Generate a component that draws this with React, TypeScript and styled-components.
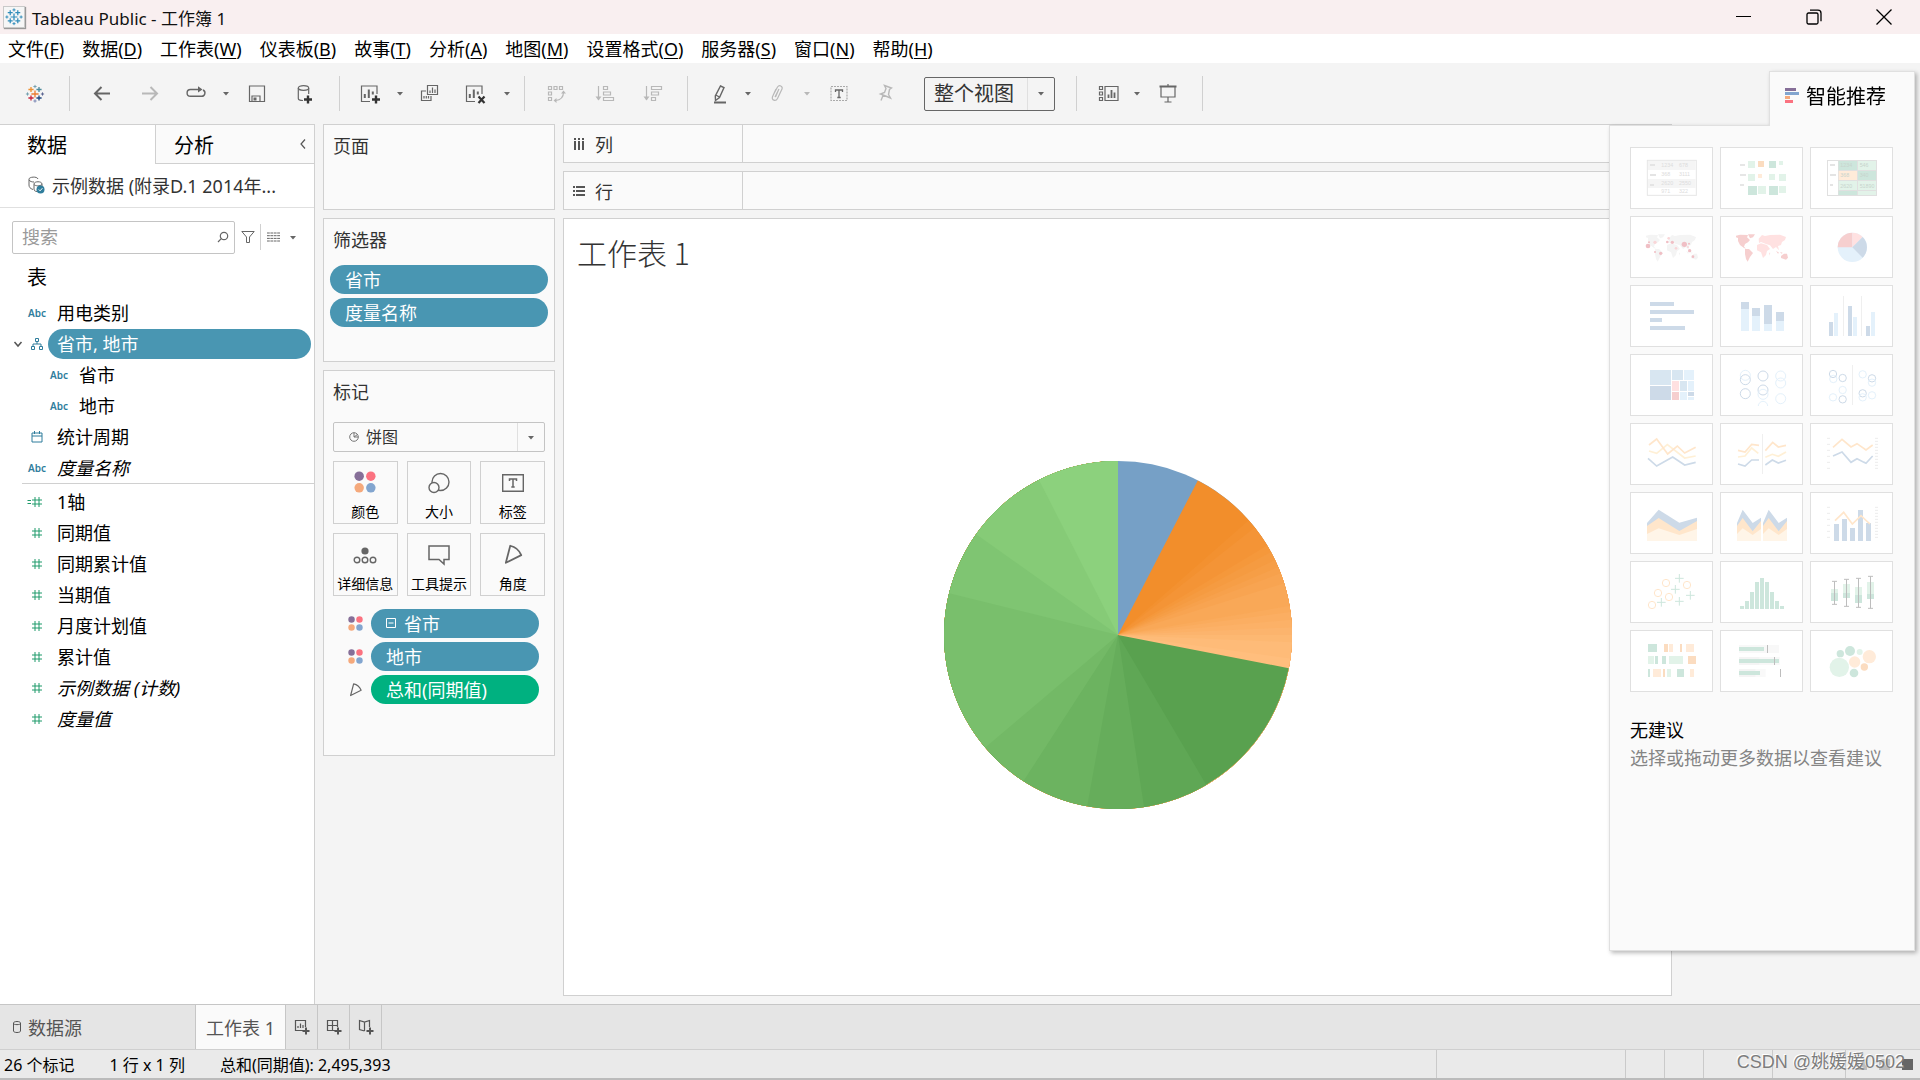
import React from "react";
import styled, { createGlobalStyle, css } from "styled-components";

const c = {
  line: "#d0d0d0",
  soft: "#e0e0e0",
  shell: "#f4f4f4",
  card: "#fafafa",
  ink: "#333333",
  icon: "#666666",
  dim: "#b8b8b8",
  blue: "#4996b2",
  green: "#00b180",
};

const Global = createGlobalStyle`
  *, *::before, *::after { box-sizing: border-box; }
  body { margin: 0; background: ${c.shell}; }
  body, button, input, select {
    font-family: "Noto Sans", "Noto Sans CJK SC", sans-serif;
    font-size: 18px;
  }
  button { flex: none; margin: 0; padding: 0; border: 0; background: none; color: inherit; cursor: pointer; }
  h1, h2, h3, p, ul { margin: 0; padding: 0; font-weight: 400; }
  ul { list-style: none; }
  svg { display: block; flex: none; }
`;

const Shell = styled.div`
  position: relative;
  display: flex;
  flex-direction: column;
  min-height: 100vh;
  overflow: hidden;
  color: ${c.ink};
`;

/* ---------- window chrome ---------- */
const TitleBar = styled.header`
  display: flex;
  align-items: center;
  height: 34px;
  padding: 0 1px 0 3px;
  background: #f9eff0;
  color: #111;
`;
const AppTitle = styled.h1`
  flex: 1;
  margin-left: 7px;
  font-size: 17px;
`;
const AppBadge = styled.span`
  padding: 1px;
  border: 1px solid #c9c9c9;
  background: #f6f6f6;
  box-shadow: 1px 1px 1px #999;
`;
const WindowButton = styled.button`
  display: grid;
  place-items: center;
  width: 70px;
  height: 34px;
`;
const MenuBar = styled.nav`
  display: flex;
  align-items: center;
  gap: 18px;
  height: 29px;
  padding-left: 8px;
  background: #fff;
  color: #000;
`;
const MenuItem = styled.button`
  white-space: nowrap;
  line-height: 28px;
  u { text-underline-offset: 2px; }
`;

/* ---------- toolbar ---------- */
const Toolbar = styled.div`
  display: flex;
  align-items: center;
  height: 61px;
  padding-left: 11px;
  background: ${c.shell};
`;
const ToolButton = styled.button<{ $tight?: boolean; $dim?: boolean }>`
  display: grid;
  place-items: center;
  width: ${(p) => (p.$tight ? 44 : 48)}px;
  height: 36px;
  color: ${(p) => (p.$dim ? c.dim : c.icon)};
`;
const CaretButton = styled.button<{ $dim?: boolean }>`
  display: grid;
  place-items: center;
  width: 15px;
  height: 36px;
  color: ${(p) => (p.$dim ? c.dim : c.icon)};
`;
const Divider = styled.span`
  width: 1px;
  height: 35px;
  margin: 0 8px 0 10px;
  background: ${c.line};
`;
const SelectBox = styled.label<{ $strong?: boolean }>`
  display: flex;
  align-items: center;
  border: 1px solid ${(p) => (p.$strong ? "#666" : "#c4c4c4")};
  border-radius: 2px;
  ${(p) =>
    p.$strong
      ? css`width: 131px; height: 34px; margin: 0 11px 0 14px; padding-left: 9px;`
      : css`height: 30px; margin-top: 9px; padding-left: 15px;`}
  select {
    flex: 1;
    min-width: 0;
    margin: 0 0 0 ${(p) => (p.$strong ? 0 : 7)}px;
    padding: 0;
    border: 0;
    appearance: none;
    background: none;
    color: ${c.ink};
    font-size: ${(p) => (p.$strong ? 20 : 16)}px;
  }
`;
const SelectArrow = styled.span`
  display: grid;
  place-items: center;
  align-self: stretch;
  width: 27px;
  border-left: 1px solid ${c.soft};
  color: ${c.icon};
`;

/* ---------- workspace ---------- */
const Workspace = styled.div`
  display: grid;
  grid-template-columns: 315px 232px minmax(0, 1fr);
  flex: 1;
  column-gap: 8px;
  padding-right: 248px;
`;
const DataPane = styled.aside`
  border-top: 1px solid ${c.line};
  border-right: 1px solid ${c.line};
  background: #fff;
`;
const PaneTabs = styled.div`
  display: grid;
  grid-template-columns: 155px 1fr;
  height: 39px;
`;
const PaneTab = styled.button<{ $active?: boolean }>`
  display: flex;
  align-items: center;
  justify-content: space-between;
  padding: 0 7px 0 ${(p) => (p.$active ? 27 : 18)}px;
  color: #000;
  font-size: 20px;
  ${(p) =>
    !p.$active &&
    css`
      border-left: 1px solid ${c.line};
      border-bottom: 1px solid ${c.line};
      background: ${c.card};
    `}
`;
const Source = styled.div`
  display: flex;
  align-items: center;
  gap: 7px;
  height: 44px;
  padding: 0 0 2px 28px;
  border-bottom: 1px solid ${c.soft};
`;
const SearchRow = styled.div`
  display: flex;
  align-items: center;
  padding: 11px 14px 0 12px;
  color: ${c.icon};
`;
const SearchBox = styled.label`
  display: flex;
  align-items: center;
  flex: 1;
  min-width: 0;
  height: 33px;
  padding: 0 5px 0 9px;
  border: 1px solid #c4c4c4;
  border-radius: 2px;
  input {
    flex: 1;
    min-width: 0;
    padding: 0;
    border: 0;
    outline: 0;
    background: none;
  }
  input::placeholder { color: #9a9a9a; opacity: 1; }
`;
const SmallButton = styled.button<{ $ruled?: boolean }>`
  display: grid;
  place-items: center;
  width: 25px;
  height: 26px;
  ${(p) => p.$ruled && css`border-left: 1px solid ${c.line};`}
`;
const TablesHeading = styled.h2`
  padding: 4px 0 0 27px;
  color: #000;
  font-size: 20px;
  line-height: 38px;
`;
const Field = styled.li<{ $nested?: boolean; $measure?: boolean }>`
  display: flex;
  align-items: center;
  height: 31px;
  padding-left: ${(p) => (p.$nested ? 22 : 0)}px;
  color: ${(p) => (p.$measure ? "#1e9a6a" : "#2f7d9c")};
`;
const FieldIcon = styled.span`
  display: grid;
  place-items: center;
  width: 20px;
  font-size: 10px;
  font-weight: 600;
`;
const FieldTwist = styled.button`
  display: grid;
  place-items: center;
  width: 10px;
  margin: 0 4px 0 13px;
  color: #555;
`;
const FieldName = styled.button<{ $picked?: boolean; $italic?: boolean }>`
  flex: 1;
  height: 30px;
  margin: 0 3px 0 1px;
  padding-left: 9px;
  border-radius: 15px;
  text-align: left;
  white-space: nowrap;
  line-height: 30px;
  color: ${(p) => (p.$picked ? "#fff" : "#000")};
  background: ${(p) => (p.$picked ? c.blue : "none")};
  font-style: ${(p) => (p.$italic ? "italic" : "normal")};
`;
const FieldList = styled.ul<{ $ruled?: boolean }>`
  ${(p) =>
    p.$ruled &&
    css`
      &::before {
        content: "";
        display: block;
        height: 1px;
        margin: 0 0 2px 22px;
        background: ${c.line};
      }
    `}
`;

const Cards = styled.div`
  display: flex;
  flex-direction: column;
  gap: 8px;
`;
const Card = styled.section<{ $h: number }>`
  min-height: ${(p) => p.$h}px;
  padding: 0 9px;
  border: 1px solid ${c.line};
  background: ${c.card};
`;
const CardTitle = styled.h2`
  font-size: 18px;
  line-height: 42px;
`;
const PillStack = styled.div`
  display: grid;
  gap: 4px;
  margin: 4px -3px 0;
`;
const Pill = styled.button<{ $green?: boolean }>`
  display: flex;
  align-items: center;
  gap: 8px;
  flex: 1;
  height: 29px;
  padding: 0 0 2px 15px;
  border-radius: 15px;
  background: ${(p) => (p.$green ? c.green : c.blue)};
  color: #fff;
`;
const MarkGrid = styled.div`
  display: grid;
  grid-template-columns: repeat(3, 1fr);
  gap: 9px;
  margin: 9px 0 13px;
`;
const MarkButton = styled.button`
  display: flex;
  flex-direction: column;
  align-items: center;
  justify-content: space-between;
  height: 63px;
  padding: 9px 0 1px;
  border: 1px solid ${c.line};
  color: #000;
  font-size: 14px;
  line-height: 20px;
  white-space: nowrap;
  svg { color: ${c.icon}; }
`;
const MarkPills = styled.ul`
  display: grid;
  gap: 4px;
  padding: 0 6px 0 15px;
  li { display: flex; align-items: center; gap: 8px; color: ${c.icon}; }
`;

const Main = styled.main`
  display: flex;
  flex-direction: column;
  gap: 8px;
  padding-bottom: 8px;
`;
const Shelf = styled.section`
  display: flex;
  height: 39px;
  border: 1px solid ${c.line};
  background: ${c.card};
`;
const ShelfName = styled.h2`
  display: flex;
  align-items: center;
  gap: 10px;
  width: 179px;
  padding-left: 9px;
  border-right: 1px solid ${c.line};
  font-size: 18px;
  color: ${c.ink};
`;
const Sheet = styled.section`
  display: flex;
  flex-direction: column;
  flex: 1;
  border: 1px solid ${c.line};
  background: #fff;
`;
const SheetTitle = styled.h2`
  padding: 10px 0 0 13px;
  font-family: "Noto Sans CJK SC", sans-serif;
  font-size: 30px;
  font-weight: 300;
  line-height: 46px;
`;
const Chart = styled.div`
  display: grid;
  place-items: center;
  flex: 1;
`;

/* ---------- show me ---------- */
const ShowMe = styled.aside`
  position: absolute;
  top: 71px;
  right: 5px;
  display: flex;
  flex-direction: column;
  width: 306px;
  filter: drop-shadow(2px 2px 2px rgba(0, 0, 0, 0.28));
`;
const ShowMeTab = styled.button`
  display: flex;
  align-items: center;
  align-self: flex-end;
  gap: 7px;
  z-index: 1;
  width: 146px;
  height: 55px;
  margin-bottom: -1px;
  padding: 0 0 8px 15px;
  border: 1px solid ${c.soft};
  border-bottom: 0;
  background: ${c.card};
  color: #000;
  font-size: 20px;
`;
const ShowMeBody = styled.div`
  min-height: 826px;
  padding: 21px 20px;
  border: 1px solid ${c.soft};
  background: ${c.card};
`;
const ThumbGrid = styled.div`
  display: grid;
  grid-template-columns: repeat(3, 83px);
  gap: 7px;
  margin-bottom: 24px;
`;
const Thumb = styled.button`
  height: 62px;
  border: 1px solid ${c.soft};
  background: #fff;
  svg { width: 81px; height: 60px; }
`;
const Advice = styled.p<{ $muted?: boolean }>`
  line-height: 28px;
  white-space: nowrap;
  color: ${(p) => (p.$muted ? "#858585" : "#000")};
`;

/* ---------- bottom bars ---------- */
const SheetTabs = styled.nav`
  display: flex;
  height: 45px;
  border-top: 1px solid #c6c6c6;
  background: #e5e5e5;
  color: #555;
`;
const SheetTab = styled.button<{ $kind: "source" | "sheet" | "add" }>`
  display: flex;
  align-items: center;
  border-right: 1px solid #c6c6c6;
  white-space: nowrap;
  ${(p) => p.$kind === "source" && css`gap: 5px; width: 196px; padding-left: 11px;`}
  ${(p) => p.$kind === "sheet" && css`justify-content: center; width: 90px; background: ${c.card};`}
  ${(p) => p.$kind === "add" && css`justify-content: center; width: 32px;`}
`;
const StatusBar = styled.footer`
  position: relative;
  display: flex;
  height: 31px;
  border-top: 1px solid #cfcfcf;
  border-bottom: 2px solid #bbb;
  background: #eaeaea;
  color: #000;
  font-size: 16px;
  line-height: 30px;
`;
const StatusText = styled.div`
  display: flex;
  flex: 1;
  gap: 35px;
  padding-left: 4px;
  white-space: nowrap;
`;
const StatusCell = styled.span<{ $w: number }>`
  display: flex;
  align-items: center;
  justify-content: flex-end;
  gap: 12px;
  width: ${(p) => p.$w}px;
  padding-right: 7px;
  border-left: 1px solid #cacaca;
`;
const Block = styled.i<{ $dark?: boolean }>`
  width: 11px;
  height: 11px;
  background: ${(p) => (p.$dark ? "#666" : "#bdbdbd")};
`;
const Watermark = styled.span`
  position: absolute;
  right: 15px;
  top: -3px;
  font-family: "Liberation Sans", "Noto Sans CJK SC", sans-serif;
  font-size: 18px;
  color: #7d7d7d;
  text-shadow: -1px -1px 0 #fff;
  white-space: nowrap;
`;

/* ---------- icons ---------- */
type IconProps = { size?: number; children: React.ReactNode };
const Icon = ({ size = 24, children }: IconProps) => (
  <svg width={size} height={size} viewBox={`0 0 ${size} ${size}`} fill="none" stroke="currentColor" strokeWidth="1.2" aria-hidden="true">
    {children}
  </svg>
);
const Caret = () => (
  <svg width="8" height="5" viewBox="0 0 8 5" aria-hidden="true">
    <path d="M1 1h6L4 4.5z" fill="currentColor" />
  </svg>
);
const cross = (x: number, y: number, r: number) => `M${x - r} ${y}h${2 * r}M${x} ${y - r}v${2 * r}`;

const LOGO: [number, number, number, string][] = [
  [12, 12, 3.6, "#eb7b30"],
  [8, 7.5, 2.6, "#ed9133"],
  [16, 7.5, 2.6, "#4e8b9c"],
  [8, 16, 2.6, "#c8233b"],
  [16, 16, 2.6, "#1f457e"],
  [12, 4.5, 1.6, "#76a1b0"],
  [12, 19, 1.6, "#7b87b5"],
  [4.5, 12, 1.6, "#76a1b0"],
  [19.5, 12, 1.6, "#5b6591"],
];
const Logo = ({ mono }: { mono?: boolean }) => (
  <svg width={mono ? 18 : 24} height={mono ? 18 : 24} viewBox={mono ? "2.5 2.5 19 19" : "0 0 24 24"} aria-hidden="true">
    {LOGO.map(([x, y, r, col], i) => (
      <path key={i} d={cross(x, y, r)} stroke={mono ? "#2f8cba" : col} strokeWidth={r < 2 ? 1 : 1.3} />
    ))}
  </svg>
);
const Plus = ({ x, y, r = 4 }: { x: number; y: number; r?: number }) => (
  <path d={cross(x, y, r)} stroke="#333" strokeWidth="2.4" />
);
const Dots = ({ size }: { size: number }) => (
  <svg width={size} height={size} viewBox="0 0 20 20" aria-hidden="true">
    <circle cx="4.7" cy="4.7" r="4.3" fill="#866f98" />
    <circle cx="15.3" cy="4.7" r="4.3" fill="#fb7280" />
    <circle cx="4.7" cy="15.3" r="4.3" fill="#f5a97c" />
    <circle cx="15.3" cy="15.3" r="4.3" fill="#82a5cf" />
  </svg>
);
const Hash = ({ calc }: { calc?: boolean }) => (
  <svg width="20" height="12" viewBox="0 0 20 12" stroke="currentColor" fill="none" aria-hidden="true">
    <path d="M5 4h10M5 8h10M8 1v10M12 1v10" />
    {calc && <path d="M0.500 4.500h3.500M0.500 7.500h3.500" />}
  </svg>
);
const Tree = () => (
  <svg width="12" height="12" viewBox="0 0 12 12" stroke="currentColor" fill="none" aria-hidden="true">
    <path d="M4.500 .5h3v3h-3zM.5 8.500h3v3h-3zM8.500 8.500h3v3h-3zM6 3.500v2.500M2 8.500V6h8v2.500" />
  </svg>
);
const Calendar = () => (
  <svg width="12" height="12" viewBox="0 0 12 12" stroke="currentColor" fill="none" aria-hidden="true">
    <path d="M1 2h10v9H1zM1 5h10M3.500 0v3M8.500 0v3" />
  </svg>
);
const Wedge = ({ size }: { size: number }) => (
  <svg width={size} height={size} viewBox="0 0 20 20" fill="none" stroke="currentColor" strokeWidth="1.600" aria-hidden="true">
    <path d="M7.500 2.500Q14.500 4 17.500 11L3.500 18z" strokeLinejoin="round" />
  </svg>
);

/* ---------- pie ---------- */
const mix = (a: number[], b: number[], t: number) => `rgb(${a.map((v, i) => Math.round(v + (b[i] - v) * t)).join(",")})`;
const ORANGE = [27.3, 48.7, 51.8, 59, 61.5, 64.5, 67, 69.2, 72.7, 80.4, 82.4, 85, 87.5, 90, 92.4, 97.8, 101];
const GREEN = [101, 149.5, 171.4, 190.2, 212.9, 229.7, 283.9, 305.4, 333, 360];
const shades = (cuts: number[], from: number[], to: number[]) =>
  cuts.slice(1).map((_, i) => ({ start: cuts[i], fill: mix(from, to, i / (cuts.length - 2)) }));
const SLICES = [
  ...shades(ORANGE, [242, 142, 43], [255, 190, 125]),
  ...shades(GREEN, [89, 161, 79], [140, 209, 125]),
];
const point = (deg: number) => {
  const a = (deg * Math.PI) / 180;
  return `${(174 + 174 * Math.sin(a)).toFixed(2)} ${(174 - 174 * Math.cos(a)).toFixed(2)}`;
};
/* Every slice runs on to twelve o'clock and the next one covers its tail, so no seams show. */
const Pie = () => (
  <svg width="348" height="348" viewBox="0 0 348 348" role="img" aria-label="饼图">
    <path d="M174 174V0A174 174 0 0 1 348 174z" fill="#76a0c6" />
    {SLICES.map((s, i) => (
      <path key={i} fill={s.fill} d={`M174 174L${point(s.start)}A174 174 0 ${s.start < 180 ? 1 : 0} 1 174 0z`} />
    ))}
  </svg>
);

/* ---------- chart thumbnails, drawn on a 249 x 186 grid ---------- */
const B1 = "#cddae8", B2 = "#e4f1fb", B3 = "#d8e6f1";
const G1 = "#cde6dc", G2 = "#e2f3e9";
const O1 = "#fbdcc0", O2 = "#ffebd9", O3 = "#ffe6cb", Y = "#fff0d6";
const R1 = "#f6cfcf", R2 = "#ffe1e1";
type R = [number, number, number, number, string];
const Rects = ({ d }: { d: R[] }) => <>{d.map(([x, y, w, h, f], i) => <rect key={i} x={x} y={y} width={w} height={h} fill={f} />)}</>;
const Rings = ({ d, w = 3, r = 15 }: { d: [number, number, string][]; w?: number; r?: number }) => (
  <>{d.map(([x, y, s], i) => <circle key={i} cx={x} cy={y} r={r} fill="none" stroke={s} strokeWidth={w} />)}</>
);
const Lines = ({ d }: { d: [string, string][] }) => (
  <>{d.map(([p, s], i) => <polyline key={i} points={p} fill="none" stroke={s} strokeWidth="5" />)}</>
);
const Nums = ({ d, x, fill = "#dcdcdc" }: { d: [string, string, number][]; x: [number, number]; fill?: string }) => (
  <g fill={fill} fontSize="16" fontFamily="Liberation Sans, sans-serif">
    {d.map(([a, b, y]) => (
      <React.Fragment key={y}>
        <text x={x[0]} y={y}>{a}</text>
        <text x={x[1]} y={y}>{b}</text>
      </React.Fragment>
    ))}
  </g>
);
const Axis = () => (
  <path d={Array.from({ length: 6 }, (_, i) => `M51 ${46 + i * 18}h9`).join("") + Array.from({ length: 11 }, (_, i) => `M195 ${46 + i * 9}h9`).join("")} stroke="#ececec" strokeWidth="3" />
);
const Continents = ({ west, east, south }: { west: string; east: string; south: string }) => (
  <g>
    <path fill={west} d="M48 59L60 56 84 57 81 64 90 72 84 79 75 84 72 92 78 98 72 96 60 87 54 75 54 66 48 64zM84 55h21l-6 9-9 3zM75 99l12 0 12 12-9 12-7 14-5-8-3-15z" />
    <path fill={east} d="M116 68L126 57 135 60 150 57 180 56 198 63 195 72 186 78 183 87 174 90 177 103 168 93 159 99 150 88 138 84 123 78 117 81zM111 87l12-5 18 5 9 12-9 6-3 12-9 9-6-17-12-6zM147 110l4 0-3 9z" />
    <path fill={south} d="M183 120l9-7 9 0 3 12-6 6-15-5zM168 104l9 6-3 3zM180 108l8 2-3 3z" />
  </g>
);

const THUMBS: [string, React.ReactNode][] = [
  ["文本表", <>
    <rect x="52" y="40" width="147" height="105" fill="#fff" stroke="#e6e6e6" strokeWidth="3" />
    <Rects d={[[54, 42, 143, 27, "#f5f5f5"], [54, 96, 143, 27, "#f5f5f5"], [60, 51, 15, 6, "#e4e4e4"], [60, 81, 18, 6, "#e4e4e4"], [60, 111, 12, 6, "#e4e4e4"]]} />
    <Nums x={[94, 147]} d={[["1234", "678", 61], ["368", "3111", 88], ["2620", "2550", 115], ["971", "322", 139]]} />
  </>],
  ["热图", <Rects d={[
    [60, 51, 15, 6, "#e6e6e6"], [60, 81, 18, 6, "#e6e6e6"], [60, 111, 12, 6, "#e6e6e6"],
    [84, 42, 21, 21, G2], [114, 42, 18, 18, O1], [147, 42, 21, 21, G1], [177, 42, 12, 12, G2],
    [84, 81, 21, 21, G2], [114, 81, 12, 12, O2], [147, 81, 18, 18, G2], [177, 81, 21, 21, G2],
    [84, 117, 27, 27, G1], [114, 117, 24, 24, G2], [147, 117, 27, 27, G1], [177, 117, 21, 21, G2]]} />],
  ["突出显示表", <>
    <Rects d={[[51, 39, 150, 108, "#e0e0e0"], [54, 42, 30, 102, "#fff"], [86, 42, 55, 27, G1], [144, 42, 54, 27, G2], [86, 72, 55, 27, O2], [144, 72, 54, 27, G1], [86, 102, 55, 27, G2], [144, 102, 54, 27, G2], [86, 132, 55, 12, G1], [144, 132, 54, 12, G2], [60, 51, 15, 6, "#e4e4e4"], [60, 81, 18, 6, "#e4e4e4"], [60, 111, 9, 6, "#e4e4e4"]]} />
    <Nums x={[91, 149]} fill="#c8d4cd" d={[["1234", "546", 60], ["368", "340", 91], ["2620", "51890", 122]]} />
  </>],
  ["符号地图", <>
    <Continents west="#f4f4f4" east="#f4f4f4" south="#f4f4f4" />
    {[[54, 90, 7], [57, 79, 3], [75, 79, 5], [75, 108, 3], [92, 112, 5], [116, 67, 4], [112, 78, 4], [127, 79, 5], [138, 97, 4], [163, 85, 8], [177, 83, 3], [174, 93, 3], [179, 104, 5], [189, 122, 4]].map(([x, y, r], i) => (
      <circle key={i} cx={x} cy={y} r={r} fill={i % 3 === 2 ? "#f9d6d8" : "#f0bfc5"} />
    ))}
  </>],
  ["填充地图", <Continents west={R1} east={R2} south={R1} />],
  ["饼图", <>
    <circle cx="127" cy="94" r="44" fill={B2} />
    <path d="M127 94V50A44 44 0 0 0 83 94z" fill={R1} />
    <path d="M127 94V50A44 44 0 0 1 158 63z" fill={R2} />
    <path d="M127 94L158 63A44 44 0 0 1 158 125z" fill={B1} />
  </>],
  ["水平条", <Rects d={[[60, 51, 72, 12, B1], [60, 75, 132, 12, B1], [60, 99, 36, 12, B1], [60, 123, 105, 12, B1]]} />],
  ["堆叠条", <Rects d={[[63, 51, 24, 21, B1], [63, 72, 24, 66, B2], [96, 69, 24, 24, B1], [96, 93, 24, 45, B2], [132, 60, 24, 57, B1], [132, 117, 24, 21, B2], [168, 81, 24, 27, B1], [168, 108, 24, 30, B2]]} />],
  ["并排条", <Rects d={[[57, 111, 12, 42, B1], [72, 84, 12, 69, B2], [99, 33, 3, 120, "#efefef"], [114, 63, 12, 90, B1], [129, 96, 12, 57, B2], [153, 33, 3, 120, "#efefef"], [168, 123, 12, 30, B1], [183, 81, 12, 72, B2]]} />],
  ["树状图", <Rects d={[[60, 48, 63, 45, B3], [60, 96, 63, 42, B1], [126, 48, 33, 30, B3], [162, 48, 30, 30, B2], [126, 81, 21, 30, R2], [150, 81, 21, 30, B3], [174, 81, 18, 30, B2], [126, 114, 21, 24, R1], [150, 114, 21, 24, B2], [174, 114, 18, 12, B1], [174, 129, 18, 9, B2]]} />],
  ["圆视图", <>
    <Rings d={[[76, 64, B2], [76, 77, B1], [76, 119, B1], [129, 66, B1], [129, 108, B1], [129, 121, B2], [182, 66, B2], [182, 87, B2], [182, 134, B2]]} />
    <path d="M115 156a14 14 0 0 1 28 0" fill="none" stroke={B2} strokeWidth="3" />
  </>],
  ["并排圆", <>
    <Rects d={[[126, 33, 3, 120, "#efefef"]]} />
    <Rings r={11} d={[[70, 75, B2], [69, 60, B1], [98, 72, B1], [98, 108, B2], [69, 130, B2], [98, 136, B1], [158, 61, B2], [186, 73, B1], [186, 86, B2], [158, 118, B1], [158, 130, B2], [186, 124, B2]]} />
  </>],
  ["连续线", <Lines d={[["57,84 80,91 112,65 164,105 197,99", Y], ["57,66 80,48 113,93 142,69 164,90 197,73", O3], ["54,106 80,129 128,102 164,126 197,118", B1]]} />],
  ["离散线", <>
    <Rects d={[[126, 33, 3, 120, "#efefef"]]} />
    <Lines d={[["54,102 75,99 95,75 115,91", Y], ["54,82 75,87 95,64 117,67", O3], ["54,123 75,129 95,111 117,111", B1], ["136,103 157,94 175,100 198,87", Y], ["136,83 158,58 175,72 198,67", O3], ["136,126 157,111 175,120 198,112", B1]]} />
  </>],
  ["双线", <><Axis /><Lines d={[["69,73 96,49 123,72 141,62 168,81 188,66", O3], ["69,99 96,87 123,118 141,107 168,121 188,99", B1]]} /></>],
  ["连续区域", <>
    <path d="M51 93L86 53 148 92 201 77V147H51z" fill={B1} />
    <path d="M51 102L86 78 148 117 201 87V147H51z" fill={O3} />
    <path d="M51 126L86 109 148 129 201 111V147H51z" fill="#fff5e8" />
  </>],
  ["离散区域", <>
    {[51, 129].map((x) => (
      <g key={x} transform={`translate(${x} 0)`}>
        <path d="M0 93L17 53 47 93 72 77V147H0z" fill={B1} />
        <path d="M0 102L17 78 47 118 72 87V147H0z" fill={O3} />
        <path d="M0 126L17 109 47 129 72 111V147H0z" fill="#fff5e8" />
      </g>
    ))}
  </>],
  ["双组合", <>
    <Axis />
    <Rects d={[[72, 96, 15, 51, B1], [96, 81, 15, 66, B1], [120, 108, 15, 39, B1], [144, 54, 15, 93, B1], [168, 93, 15, 54, B1]]} />
    <Lines d={[["75,86 101,61 127,96 153,71 180,96", O3]]} />
  </>],
  ["散点图", <>
    <Rings r={11} d={[[108, 66, O3], [171, 72, O3], [84, 96, O3], [117, 108, O3], [66, 132, O3]]} />
    <path d={[[148, 52], [136, 85], [181, 103], [94, 124], [148, 121]].map(([x, y]) => cross(x, y, 13)).join("")} stroke={G1} strokeWidth="3" />
  </>],
  ["直方图", <Rects d={[9, 24, 51, 81, 93, 81, 51, 24, 9].map((h, i): R => [60 + i * 15, 144 - h, 12, h, G1])} />],
  ["盒须图", <>
    <Rects d={[[63, 84, 21, 12, G2], [63, 96, 21, 24, G1], [99, 69, 21, 27, G2], [99, 96, 21, 15, G1], [135, 78, 21, 24, G2], [135, 102, 21, 24, G1], [171, 63, 21, 36, G2], [171, 99, 21, 15, G1]]} />
    <path d="M73.500 61v69M66 61h15M66 130h15M109.500 55v81M102 55h15M102 136h15M145.500 52v87M138 52h15M138 139h15M181.500 46v96M174 46h15M174 142h15" stroke="#bdbdbd" strokeWidth="3" />
  </>],
  ["甘特图", <Rects d={[
    [54, 42, 27, 24, G1], [102, 42, 12, 24, O1], [117, 42, 12, 24, O2], [150, 42, 6, 24, O1], [168, 42, 24, 24, O2],
    [54, 78, 18, 24, G2], [75, 78, 9, 24, G1], [96, 78, 12, 24, G1], [117, 78, 42, 24, G2], [174, 78, 24, 24, O1],
    [54, 117, 6, 24, G1], [69, 117, 24, 24, O2], [99, 117, 6, 24, O1], [111, 117, 12, 24, G2], [141, 117, 21, 24, G1], [180, 117, 12, 24, O2]]} />],
  ["靶心图", <Rects d={[
    [57, 45, 120, 24, "#f8f8f8"], [57, 81, 62, 24, "#f4f4f4"], [119, 81, 60, 24, "#f8f8f8"], [57, 117, 50, 24, "#f4f4f4"], [107, 117, 30, 24, "#f9f9f9"],
    [57, 51, 75, 12, G1], [57, 87, 120, 12, G1], [57, 123, 63, 12, G1],
    [141, 45, 3, 24, "#bdbdbd"], [162, 81, 3, 24, "#bdbdbd"], [180, 117, 3, 24, "#bdbdbd"]]} />],
  ["填充气泡图", <>
    {([[88, 112, 29, G2], [91, 71, 11, G1], [120, 63, 15, G1], [149, 66, 9, G2], [134, 96, 17, O2], [178, 80, 20, O2], [163, 111, 11, O1], [132, 129, 13, G1]] as [number, number, number, string][]).map(([x, y, r, f], i) => (
      <circle key={i} cx={x} cy={y} r={r} fill={f} />
    ))}
  </>],
];

const MENUS: [string, string][] = [
  ["文件", "F"], ["数据", "D"], ["工作表", "W"], ["仪表板", "B"], ["故事", "T"], ["分析", "A"],
  ["地图", "M"], ["设置格式", "O"], ["服务器", "S"], ["窗口", "N"], ["帮助", "H"],
];
const MEASURES: [string, boolean?][] = [
  ["1轴"], ["同期值"], ["同期累计值"], ["当期值"], ["月度计划值"], ["累计值"], ["示例数据 (计数)", true], ["度量值", true],
];

const FieldRow = ({ icon, name, nested, picked, italic, measure, open }: {
  icon: React.ReactNode; name: string; nested?: boolean; picked?: boolean; italic?: boolean; measure?: boolean; open?: boolean;
}) => (
  <Field $nested={nested} $measure={measure}>
    <FieldTwist aria-label={open ? `折叠 ${name}` : undefined} tabIndex={open ? 0 : -1}>
      {open && (
        <svg width="10" height="8" viewBox="0 0 10 8" fill="none" stroke="currentColor" strokeWidth="1.500"><path d="M1.500 2L5 6 8.500 2" /></svg>
      )}
    </FieldTwist>
    <FieldIcon>{icon}</FieldIcon>
    <FieldName $picked={picked} $italic={italic}>{name}</FieldName>
  </Field>
);

const SheetBars = () => (
  <><path d="M12 19.500H3.500V4h15.500v8" /><path d="M6.800 16v-4M10.800 16V7.500M14.800 12.500V9.500" strokeWidth="2" /></>
);

export default function App() {
  return (
    <Shell>
      <Global />
      <TitleBar>
        <AppBadge><Logo mono /></AppBadge>
        <AppTitle>Tableau Public - 工作簿 1</AppTitle>
        <WindowButton aria-label="最小化"><svg width="16" height="16"><path d="M0 7.500h15" stroke="#000" /></svg></WindowButton>
        <WindowButton aria-label="还原">
          <svg width="16" height="16" fill="none" stroke="#000" strokeWidth="1.300"><rect x="1" y="4" width="11" height="11" rx="1.500" /><path d="M4 1.200h8a3 3 0 0 1 3 3v8" /></svg>
        </WindowButton>
        <WindowButton aria-label="关闭"><svg width="16" height="16"><path d="M.5.5l15 15M15.500.5l-15 15" stroke="#000" strokeWidth="1.300" /></svg></WindowButton>
      </TitleBar>

      <MenuBar>
        {MENUS.map(([name, key]) => <MenuItem key={name}>{name}(<u>{key}</u>)</MenuItem>)}
      </MenuBar>

      <Toolbar>
        <ToolButton aria-label="开始"><Logo /></ToolButton>
        <Divider />
        <ToolButton aria-label="撤消"><Icon><path d="M20 11.500H5M11.500 5L5 11.500 11.500 18" strokeWidth="2" /></Icon></ToolButton>
        <ToolButton $dim aria-label="重做"><Icon><path d="M4 11.500h15M12.500 5L19 11.500 12.500 18" strokeWidth="2" /></Icon></ToolButton>
        <ToolButton $tight aria-label="重播动画"><Icon><path d="M15 7.500H6.500a3.300 3.300 0 0 0 0 6.800h11a3.300 3.300 0 0 0 1.500-6.300" strokeWidth="1.400" /><path d="M14 4.300l4.500 3.200-4.500 3z" fill="currentColor" stroke="none" /></Icon></ToolButton>
        <CaretButton aria-label="动画选项"><Caret /></CaretButton>
        <ToolButton aria-label="保存"><Icon><path d="M4.500 4h15v15.500h-15zM7 19.500V14h8v5.500" /><path d="M8.500 15.500h3v3h-3z" fill="currentColor" stroke="none" /></Icon></ToolButton>
        <ToolButton aria-label="新建数据源"><Icon><ellipse cx="10.500" cy="6" rx="5.200" ry="2.300" /><path d="M5.300 6v10.500c0 1.200 2 2 4.700 2M15.700 6v6" /><Plus x={15} y={17.500} /></Icon></ToolButton>
        <Divider />
        <ToolButton $tight aria-label="新建工作表"><Icon><SheetBars /><Plus x={18} y={17.500} /></Icon></ToolButton>
        <CaretButton aria-label="新建选项"><Caret /></CaretButton>
        <ToolButton $tight aria-label="复制工作表"><Icon><path d="M10.500 3.500h10v9h-10zM9 9H4.500v9.500H14V14" /><path d="M13 11V8.500M15.500 11V5.500M18 11V7.500M7 16.500V14M9.300 16.500V14M11.500 16.500V14" /></Icon></ToolButton>
        <ToolButton aria-label="清除工作表"><Icon><SheetBars /><path d="M15.500 14.500l6 6.500M21.500 14.500l-6 6.500" stroke="#333" strokeWidth="2.200" /></Icon></ToolButton>
        <CaretButton aria-label="清除选项"><Caret /></CaretButton>
        <Divider />
        <ToolButton $dim aria-label="交换行和列"><Icon><path d="M3.500 4.500h3v3h-3zM9 4.500h3v3H9zM14.500 4.500h3v3h-3zM3.500 10h3v3h-3zM3.500 15.500h3v3h-3zM18.500 10c0 5-2.500 8-8 8.500" /><path d="M18.500 8.500l2.500 3h-5zM8.500 18.500l3-2.500v5z" fill="currentColor" stroke="none" /></Icon></ToolButton>
        <ToolButton $dim aria-label="升序排序"><Icon><path d="M5.500 4v14M10.500 4.500h4v3h-4zM10.500 10h7v3h-7zM10.500 15.500h10v3h-10z" /><path d="M2.500 14.500h6l-3 4z" fill="currentColor" stroke="none" /></Icon></ToolButton>
        <ToolButton $dim aria-label="降序排序"><Icon><path d="M5.500 4v14M10.500 4.500h10v3h-10zM10.500 10h7v3h-7zM10.500 15.500h4v3h-4z" /><path d="M2.500 14.500h6l-3 4z" fill="currentColor" stroke="none" /></Icon></ToolButton>
        <Divider />
        <ToolButton $tight aria-label="突出显示"><Icon><path d="M14.500 4l3.500 1.500-4.500 10-4 3-.2-4.700zM9.800 13l3.500 2" strokeWidth="1.400" /><path d="M8 20.500h12" strokeWidth="2" /></Icon></ToolButton>
        <CaretButton aria-label="突出显示选项"><Caret /></CaretButton>
        <ToolButton $tight $dim aria-label="组成员"><Icon><path d="M8.500 12.500l4-7.500c1.800-2.500 5.500-1 4.500 2l-4.500 9.500c-1.700 3.200-6.300 1.800-5-1.800L11 7M10 15l4-8M13.500 8l-3 7" /></Icon></ToolButton>
        <CaretButton $dim aria-label="组选项"><Caret /></CaretButton>
        <ToolButton aria-label="显示标记标签"><Icon><path d="M5 4.500h16v14H5z" stroke="#aaa" strokeDasharray="2 1" /><path d="M9.500 10V8h7v2M13 8v7.500M11.300 15.500h3.400" strokeWidth="1.300" /></Icon></ToolButton>
        <ToolButton $dim aria-label="固定轴"><Icon><path d="M10.500 3.500l7 2.500-2 1.500-1 5 2 3.500-10-4 4-1.500 1.500-4zM9 13.500L7 18.500" strokeWidth="1.400" /></Icon></ToolButton>
        <SelectBox $strong>
          <select aria-label="适合"><option>整个视图</option></select>
          <SelectArrow><Caret /></SelectArrow>
        </SelectBox>
        <Divider />
        <ToolButton $tight aria-label="显示/隐藏卡"><Icon><path d="M4.500 4.500h3v3h-3zM4.500 10h3v3h-3zM4.500 15.500h3v3h-3zM10 4.500h13v14H10z" /><path d="M13.500 16v-3.500M16.500 16V8M19.500 16v-5.500" strokeWidth="1.800" /></Icon></ToolButton>
        <CaretButton aria-label="卡选项"><Caret /></CaretButton>
        <ToolButton aria-label="演示模式"><Icon><path d="M5 5v10h14V5M12 15v5M8.500 20h7M12 2v2" /><path d="M3.500 4.500h17" strokeWidth="2" /></Icon></ToolButton>
        <Divider />
      </Toolbar>

      <Workspace>
        <DataPane>
          <PaneTabs>
            <PaneTab $active>数据</PaneTab>
            <PaneTab>
              分析
              <svg width="8" height="12" viewBox="0 0 8 12" fill="none" stroke="#555" strokeWidth="1.200"><path d="M6 1.500L2 6l4 4.500" /></svg>
            </PaneTab>
          </PaneTabs>
          <Source>
            <svg width="17" height="18" viewBox="0 0 17 18" fill="none" stroke="#666" aria-hidden="true">
              <path d="M5 13.500C2 12.500 1 11 1 9V3c0-2 8-3 9 0M1 4c1 1.500 3 2 5 2" />
              <path d="M6 8c0-3 8-3 8 0v2M6 8v5c0 1.500 1 2.500 3 2.500M6 8.500c1 1.500 6 2 8 0" />
              <circle cx="12.500" cy="13.500" r="4" fill="#2f7d9c" stroke="none" /><path d="M10.800 13.500l1.300 1.300 2.300-2.600" stroke="#fff" />
            </svg>
            示例数据 (附录D.1 2014年...
          </Source>
          <SearchRow>
            <SearchBox>
              <input placeholder="搜索" aria-label="搜索" />
              <svg width="12" height="12" viewBox="0 0 12 12" fill="none" stroke="currentColor" strokeWidth="1.200"><circle cx="7" cy="5" r="3.700" /><path d="M4.300 7.700L1 11" /></svg>
            </SearchBox>
            <SmallButton aria-label="筛选字段"><svg width="14" height="14" viewBox="0 0 14 14" fill="none" stroke="currentColor"><path d="M.8 1.500h12.400L8.500 7v5.500h-3V7z" /></svg></SmallButton>
            <SmallButton $ruled aria-label="视图"><svg width="13" height="10" viewBox="0 0 13 10" stroke="currentColor"><path d="M0 1h13M0 3.700h13M0 6.400h13M0 9h13" strokeDasharray="2.800 .6" /></svg></SmallButton>
            <CaretButton aria-label="视图选项"><Caret /></CaretButton>
          </SearchRow>
          <TablesHeading>表</TablesHeading>
          <FieldList>
            <FieldRow icon="Abc" name="用电类别" />
            <FieldRow icon={<Tree />} name="省市, 地市" picked open />
            <FieldRow icon="Abc" name="省市" nested />
            <FieldRow icon="Abc" name="地市" nested />
            <FieldRow icon={<Calendar />} name="统计周期" />
            <FieldRow icon="Abc" name="度量名称" italic />
          </FieldList>
          <FieldList $ruled>
            {MEASURES.map(([name, italic], i) => <FieldRow key={name} icon={<Hash calc={i === 0} />} name={name} italic={italic} measure />)}
          </FieldList>
        </DataPane>

        <Cards>
          <Card $h={86}><CardTitle>页面</CardTitle></Card>
          <Card $h={144}>
            <CardTitle>筛选器</CardTitle>
            <PillStack><Pill>省市</Pill><Pill>度量名称</Pill></PillStack>
          </Card>
          <Card $h={386}>
            <CardTitle>标记</CardTitle>
            <SelectBox>
              <svg width="10" height="10" viewBox="0 0 10 10" fill="none" stroke="#777" aria-hidden="true"><circle cx="5" cy="5" r="4.300" /><path d="M5 .7V5L8.500 2.500M5 5h4.300" /></svg>
              <select aria-label="标记类型"><option>饼图</option></select>
              <SelectArrow><Caret /></SelectArrow>
            </SelectBox>
            <MarkGrid>
              <MarkButton><Dots size={22} />颜色</MarkButton>
              <MarkButton><Icon><circle cx="13.500" cy="11" r="8.500" strokeWidth="1.400" /><circle cx="7" cy="16.500" r="5" fill="#fafafa" strokeWidth="1.400" /></Icon>大小</MarkButton>
              <MarkButton><Icon><path d="M1.700 3.700h20.600v16.600H1.700z" strokeWidth="1.400" /><path d="M8.500 10V8h7v2M12 8v8M10.300 16h3.400" strokeWidth="1.500" /></Icon>标签</MarkButton>
              <MarkButton><Icon><circle cx="12" cy="8" r="3.600" fill="currentColor" stroke="none" /><circle cx="4" cy="17" r="2.800" strokeWidth="1.400" /><circle cx="12" cy="17" r="2.800" strokeWidth="1.400" /><circle cx="20" cy="17" r="2.800" strokeWidth="1.400" /></Icon>详细信息</MarkButton>
              <MarkButton><Icon><path d="M2 3h20v13.500h-5V21l-5-4.500H2z" strokeWidth="1.500" /></Icon>工具提示</MarkButton>
              <MarkButton><Wedge size={22} />角度</MarkButton>
            </MarkGrid>
            <MarkPills>
              <li>
                <Dots size={15} />
                <Pill><svg width="10" height="10" viewBox="0 0 10 10" fill="none" stroke="#fff"><path d="M.5.5h9v9h-9zM2.500 5h5" /></svg>省市</Pill>
              </li>
              <li><Dots size={15} /><Pill>地市</Pill></li>
              <li><Wedge size={15} /><Pill $green>总和(同期值)</Pill></li>
            </MarkPills>
          </Card>
        </Cards>

        <Main>
          <Shelf>
            <ShelfName>
              <svg width="12" height="12" viewBox="0 0 12 12" fill="#555" aria-hidden="true"><path d="M1 0h2v2H1zM1 3h2v9H1zM5 0h2v2H5zM5 3h2v9H5zM9 0h2v2H9zM9 3h2v9H9z" /></svg>
              列
            </ShelfName>
          </Shelf>
          <Shelf>
            <ShelfName>
              <svg width="12" height="12" viewBox="0 0 12 12" fill="#555" aria-hidden="true"><path d="M0 1h2v2H0zM3 1h9v2H3zM0 5h2v2H0zM3 5h9v2H3zM0 9h2v2H0zM3 9h9v2H3z" /></svg>
              行
            </ShelfName>
          </Shelf>
          <Sheet>
            <SheetTitle>工作表 1</SheetTitle>
            <Chart><Pie /></Chart>
          </Sheet>
        </Main>
      </Workspace>

      <SheetTabs>
        <SheetTab $kind="source">
          <svg width="12" height="14" viewBox="0 0 12 14" fill="none" stroke="currentColor"><path d="M2.500 3c0-2 7-2 7 0v8c0 2-7 2-7 0zM2.500 3.500c0 1.500 7 1.500 7 0" /></svg>
          数据源
        </SheetTab>
        <SheetTab $kind="sheet">工作表 1</SheetTab>
        <SheetTab $kind="add" aria-label="新建工作表">
          <Icon size={16}><path d="M9 11.500H1.500v-10h10V8M4 9V7M6.500 9V4.500M9 9V6" /><path d={cross(12, 12, 3.5)} strokeWidth="2" /></Icon>
        </SheetTab>
        <SheetTab $kind="add" aria-label="新建仪表板">
          <Icon size={16}><path d="M9 11.500H1.500v-10h10V8M6.500 1.500v10M1.500 6.500h10" /><path d={cross(12, 12, 3.5)} strokeWidth="2" /></Icon>
        </SheetTab>
        <SheetTab $kind="add" aria-label="新建故事">
          <Icon size={16}><path d="M6.500 12L1.500 10.500v-9L6.500 3l5-1.500V8M6.500 3v9" /><path d={cross(12, 12, 3.5)} strokeWidth="2" /></Icon>
        </SheetTab>
      </SheetTabs>

      <StatusBar>
        <StatusText><span>26 个标记</span><span>1 行 x 1 列</span><span>总和(同期值): 2,495,393</span></StatusText>
        <StatusCell $w={189} />
        <StatusCell $w={39} />
        <StatusCell $w={39} />
        <StatusCell $w={69} />
        <StatusCell $w={73} />
        <StatusCell $w={75}><Block /><Block /><Block $dark /></StatusCell>
        <Watermark>CSDN @姚媛媛0502</Watermark>
      </StatusBar>

      <ShowMe>
        <ShowMeTab>
          <svg width="14" height="15" viewBox="0 0 14 15" aria-hidden="true">
            <path d="M0 0h11v3H0z" fill="#866f98" /><path d="M0 4h14v3H0z" fill="#82a5cf" /><path d="M0 8h5v3H0z" fill="#f5a97c" /><path d="M0 12h8v3H0z" fill="#fb7280" />
          </svg>
          智能推荐
        </ShowMeTab>
        <ShowMeBody>
          <ThumbGrid>
            {THUMBS.map(([name, art]) => (
              <Thumb key={name} aria-label={name}><svg viewBox="3 3 243 180">{art}</svg></Thumb>
            ))}
          </ThumbGrid>
          <Advice>无建议</Advice>
          <Advice $muted>选择或拖动更多数据以查看建议</Advice>
        </ShowMeBody>
      </ShowMe>
    </Shell>
  );
}
